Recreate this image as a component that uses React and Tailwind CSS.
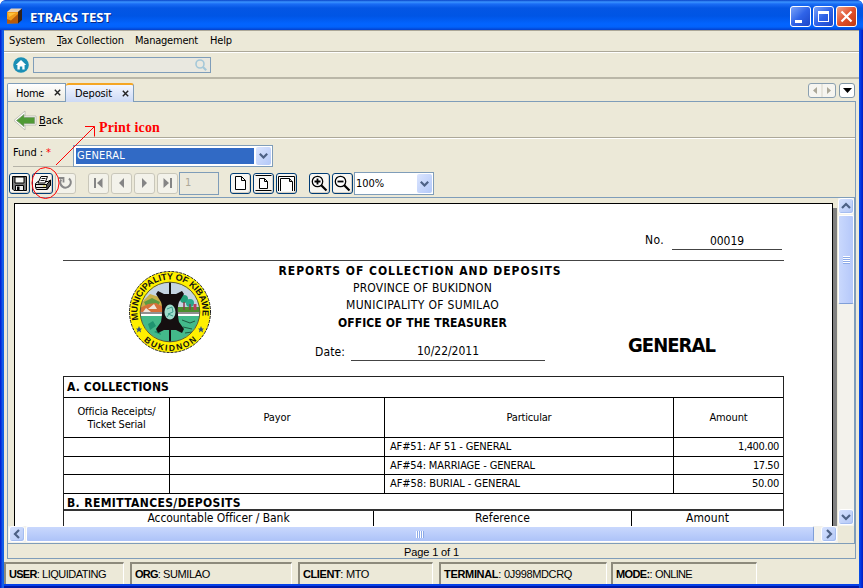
import { useLayoutEffect, useRef, useState } from "react";

const tahoma = "font-['DejaVu_Sans_Condensed','DejaVu_Sans',sans-serif]";
const arial = "font-['Liberation_Sans',sans-serif]";

// Text run that spreads its letters so that it fills exactly `w` pixels.
function Fit({ w, children, className = "" }) {
  const ref = useRef(null);
  const [gap, setGap] = useState(0);
  useLayoutEffect(() => {
    const el = ref.current;
    el.style.letterSpacing = "0px";
    const natural = el.getBoundingClientRect().width;
    setGap((w - natural) / el.textContent.length);
    el.style.letterSpacing = `${(w - natural) / el.textContent.length}px`;
  }, [w]);
  return (
    <span
      ref={ref}
      className={`inline-block shrink-0 whitespace-pre ${className}`}
      style={{ letterSpacing: `${gap}px` }}
    >
      {children}
    </span>
  );
}

function TitleBar() {
  return (
    <header className="flex h-[30px] shrink-0 items-center rounded-t-[6px] bg-[linear-gradient(to_bottom,#0842c8_0px,#3a93ff_2px,#1a6cf5_4px,#0456e4_8px,#0055e5_16px,#0264ff_24px,#0262fb_27px,#0340cc_30px)] pr-[6px] pl-[6px]">
      <svg width="17" height="17" viewBox="0 0 17 17" className="mt-[2px] shrink-0">
        <path d="M1 4 5 0.5H16L12 4Z" fill="#e8d2b8" />
        <path d="M1 4H12V15L1 15.5Z" fill="#f19a1a" />
        <path d="M1 11 5 12.500 12 6V15.5H1Z" fill="#b85a0a" />
        <path d="M12 4 16 0.5V12L12 15.5Z" fill="#33221a" />
        <path d="M2 5 10 5 3 9Z" fill="#ffc23a" />
      </svg>
      <Fit
        w={81}
        className="mt-[3px] ml-[7px] font-['Open_Sans',sans-serif] text-[13px] leading-4 font-bold text-white [text-shadow:1px_1px_0_#0a2a88]"
      >
        ETRACS TEST
      </Fit>
      <div className="mt-[2px] ml-auto flex gap-[2px]">
        <div className="size-[21px] rounded-[3px] border border-white bg-linear-to-br from-[#7ba2f8] via-[#2f63e8] to-[#1c46c8]">
          <div className="mt-[13px] ml-1 h-[3px] w-[7px] bg-white" />
        </div>
        <div className="size-[21px] rounded-[3px] border border-white bg-linear-to-br from-[#7ba2f8] via-[#2f63e8] to-[#1c46c8]">
          <div className="mt-1 ml-1 h-[11px] w-[11px] border border-t-[3px] border-white" />
        </div>
        <div className="flex size-[21px] items-center justify-center rounded-[3px] border border-white bg-linear-to-br from-[#f0a085] via-[#e0502c] to-[#c03a10]">
          <svg width="13" height="13" viewBox="0 0 13 13">
            <path d="M1.5 1.5 11.5 11.5M11.5 1.5 1.5 11.5" stroke="#fff" strokeWidth="2.2" />
          </svg>
        </div>
      </div>
    </header>
  );
}

function MenuBar() {
  return (
    <nav className="flex h-[22px] shrink-0 border-b border-white">
      <div className="flex h-[21px] flex-1 items-center border-b border-[#aca899] pt-px pl-[5px]">
        <Fit w={36}>System</Fit>
        <div className="w-3" />
        <Fit w={67}>
          <u>T</u>ax Collection
        </Fit>
        <div className="w-[11px]" />
        <Fit w={63}>Management</Fit>
        <div className="w-3" />
        <Fit w={22}>Help</Fit>
      </div>
    </nav>
  );
}

function SearchBar() {
  return (
    <div className="flex h-[26px] shrink-0 items-start border-b-2 border-[#bab7a8] pt-1 pl-[9px]">
      <svg width="16" height="16" viewBox="0 0 16 16">
        <circle cx="8" cy="8" r="7.8" fill="#1b8fb5" />
        <path d="M2.8 8 8 3 13.2 8H11.6V12.4H9.3V9.4H6.8V12.4H4.4V8Z" fill="#fff" />
      </svg>
      <div className="ml-1 flex h-4 w-[178px] items-center justify-end border border-[#7f9db9] bg-[#e9e8e0] pr-[3px]">
        <svg width="12" height="12" viewBox="0 0 12 12">
          <circle cx="5" cy="5" r="4" fill="none" stroke="#a5c8d8" strokeWidth="1.6" />
          <path d="M8 8 11.2 11.2" stroke="#a5c8d8" strokeWidth="2.2" />
        </svg>
      </div>
    </div>
  );
}

function CloseX() {
  return (
    <svg width="7" height="7" viewBox="0 0 7 7" className="shrink-0">
      <path d="M0.8 0.8 6.2 6.2M6.2 0.8 0.8 6.2" stroke="#222" strokeWidth="1.4" />
    </svg>
  );
}

function Tabs() {
  return (
    <div className="flex h-[22px] shrink-0 items-end pl-[3px]">
      <div className="flex h-[18px] w-[59px] items-center rounded-tl-[2px] border border-b-0 border-[#7f9db9] bg-linear-to-b from-white to-[#eceae0] pl-2">
        <Fit w={28} className="mt-[3px]">
          Home
        </Fit>
        <div className="w-[10px]" />
        <CloseX />
      </div>
      <div className="relative z-10 -mb-px flex h-[19px] w-[68px] items-center rounded-t-[3px] border-t-2 border-r border-t-[#f5a623] border-r-[#7f9db9] bg-linear-to-b from-[#f3f6fe] to-[#ccd9f5] pl-[9px]">
        <Fit w={37} className="mt-px">
          Deposit
        </Fit>
        <div className="w-[10px]" />
        <CloseX />
      </div>
      <div className="mb-[3px] ml-auto flex h-[15px] w-7 items-center justify-around rounded-[3px] border border-[#8ba0b0] bg-[#f6f5f0]">
        <svg width="26" height="13" viewBox="0 0 26 13">
          <path d="M8 3V10L4 6.500ZM18 3V10L22 6.500Z" fill="#aca899" />
          <path d="M13 0V13" stroke="#d8d5c8" />
        </svg>
      </div>
      <div className="mr-1 mb-[3px] ml-[3px] flex h-[15px] w-4 items-center justify-center rounded-[3px] border border-[#7f95a5] bg-white">
        <svg width="9" height="5" viewBox="0 0 9 5">
          <path d="M0 0H9L4.500 5Z" fill="#000" />
        </svg>
      </div>
    </div>
  );
}

function ArrowBox({ className }) {
  return (
    <div
      className={`flex items-center justify-center rounded-[2px] bg-linear-to-br from-[#dbe5fe] to-[#b3c8f8] ${className}`}
    >
      <svg width="9" height="6" viewBox="0 0 9 6">
        <path d="M0.800 0.800 4.500 4.500 8.200 0.800" fill="none" stroke="#4d6185" strokeWidth="2.2" />
      </svg>
    </div>
  );
}

function ToolButton({ off = false, children }) {
  return (
    <div
      className={`flex size-[21px] shrink-0 items-center justify-center rounded-[3px] border ${
        off ? "border-[#c9c7ba] bg-[#f3f2ea]" : "border-[#003c74] bg-[#f7f6f2] shadow-[inset_-1px_-1px_0_#d6d0c5]"
      }`}
    >
      <svg width="19" height="19" viewBox="0 0 19 19">
        {children}
      </svg>
    </div>
  );
}

function ReportToolbar() {
  return (
    <div className="mt-[5px] flex h-[25px] shrink-0 items-start pl-px">
      <div className="mt-px flex gap-[2px]">
        <ToolButton>
          <path d="M2.500 2.500H16.500V16.500H4L2.500 15Z" fill="#777" stroke="#000" />
          <path d="M5 3H14V9H5Z" fill="#f8f8f4" stroke="#000" />
          <path d="M5.500 11.500H13.500V16.500H5.500Z" fill="#eee" stroke="#000" />
          <path d="M7 12.500H9.500V16H7Z" fill="#000" />
        </ToolButton>
        <ToolButton>
          <path d="M2.500 9.500 5 7.500H15L17.500 6V11L14 15.500H3.500L2.500 13.500Z" fill="#e4e4e0" stroke="#000" />
          <path d="M5 9 8 2.500H14.500L12 9Z" fill="#fff" stroke="#000" />
          <path d="M8.500 4.500H12.500M7.500 6.500H11.500" stroke="#000" strokeWidth="0.900" />
          <path d="M2.500 10.500H13.500L17.500 6.500M3 13.500H13.500" fill="none" stroke="#000" />
          <path d="M13.500 10.500 17.500 6.500V11L14 15.500Z" fill="#555" stroke="#000" />
          <path d="M10 12H12.500" stroke="#d8c820" strokeWidth="1.200" />
        </ToolButton>
        <ToolButton off>
          <path d="M13 4.500A5.200 5.200 0 1 1 5.200 5.500" fill="none" stroke="#888" strokeWidth="2.200" />
          <path d="M2.500 4H7.500V8.500" fill="none" stroke="#888" strokeWidth="1.800" />
        </ToolButton>
      </div>
      <div className="mt-px ml-3 flex gap-[2px]">
        <ToolButton off>
          <path d="M5 4H7V14H5ZM13.500 4V14L8 9Z" fill="#858585" />
        </ToolButton>
        <ToolButton off>
          <path d="M12 4V14L7 9Z" fill="#858585" />
        </ToolButton>
        <ToolButton off>
          <path d="M7 4V14L12 9Z" fill="#858585" />
        </ToolButton>
        <ToolButton off>
          <path d="M5.500 4V14L11 9ZM12 4H14V14H12Z" fill="#858585" />
        </ToolButton>
      </div>
      <div className="ml-px flex h-[23px] w-10 items-center border border-[#7f9db9] bg-[#ebe9dc] pl-[5px] text-[#aca899]">1</div>
      <div className="mt-px ml-[11px] flex gap-[2px]">
        <ToolButton>
          <path d="M4.500 2.500H10.500L14.500 6.500V15.500H4.500ZM10.500 2.500V6.500H14.500" fill="#fff" stroke="#000" />
        </ToolButton>
        <ToolButton>
          <path d="M1.500 1.500H17.500M1.500 16.500H17.500M5.500 4.500H10.500L13.500 7.500V14.500H5.500ZM10.500 4.500V7.500H13.500" fill="#fff" stroke="#000" />
        </ToolButton>
        <ToolButton>
          <path d="M1.500 17V2.500H17.500V17M3.500 17V4.500H12.500L15.500 8V17M12.500 4.500V7.500H15.500" fill="#fff" stroke="#000" />
        </ToolButton>
      </div>
      <div className="mt-px ml-3 flex gap-[2px]">
        <ToolButton>
          <path d="M11 11 16.500 16.500" stroke="#000" strokeWidth="2.200" />
          <circle cx="7.500" cy="7.500" r="5.200" fill="#fff" stroke="#000" strokeWidth="1.300" />
          <path d="M4.500 7.500H10.500M7.500 4.500V10.500" stroke="#000" strokeWidth="1.800" />
        </ToolButton>
        <ToolButton>
          <path d="M11 11 16.500 16.500" stroke="#000" strokeWidth="2.200" />
          <circle cx="7.500" cy="7.500" r="5.200" fill="#fff" stroke="#000" strokeWidth="1.300" />
          <path d="M4.500 7.500H10.500" stroke="#000" strokeWidth="1.800" />
        </ToolButton>
      </div>
      <div className="ml-px flex h-[23px] w-20 items-center justify-between border border-[#7f9db9] bg-white pr-px pl-px">
        <Fit w={28} className="mt-[2px]">
          100%
        </Fit>
        <ArrowBox className="h-[19px] w-[15px]" />
      </div>
    </div>
  );
}

function Seal() {
  return (
    <svg width="84" height="84" viewBox="-42 -42 84 84">
      <defs>
        <path id="arcTop" d="M-31.500 8A32.500 32.500 0 1 1 31.500 8" />
        <path id="arcBottom" d="M-31 23.500A39 39 0 0 0 31 23.500" />
        <clipPath id="disc">
          <circle r="29.500" />
        </clipPath>
      </defs>
      <circle r="40.500" fill="#fff000" stroke="#222" strokeWidth="1" strokeDasharray="3 1" />
      <g clipPath="url(#disc)">
        <rect x="-30" y="-30" width="60" height="60" fill="#c5d5e2" />
        <path d="M-30-8-20-18-8-14V-2H-30Z" fill="#c9b04a" />
        <path d="M-26-10-18-14-10-10-12-6-24-6Z" fill="#5f9a42" />
        <path d="M-30-4-22-8-14-9-7-5V1H-30Z" fill="#d5713a" />
        <path d="M-22-3-16-8-13-3ZM-27 0-24-4-19 0Z" fill="#f0e6dc" />
        <path d="M8-5H30V1H8Z" fill="#4c8f2e" />
        <circle cx="14" cy="-13" r="4" fill="#22a07a" />
        <circle cx="20" cy="-9" r="4" fill="#2aa88c" />
        <path d="M14-10V-2M20-8V-2" stroke="#8b3b4c" strokeWidth="1.500" />
        <path d="M25-8V-2" stroke="#b9405a" strokeWidth="3" />
        <rect x="-30" y="0" width="60" height="4" fill="#fff" />
        <path d="M-30 1H30" stroke="#222" strokeWidth="1" />
        <rect x="-30" y="4" width="60" height="27" fill="#43b98a" />
        <path d="M-22 12-17 9-14 14-20 18ZM-16 20-11 17-9 23" fill="#1f9470" />
        <path d="M12 8 20 11 25 9M13 15 22 17M15 21 22 20" stroke="#1d5a40" fill="none" />
        <path d="M0-30V30" stroke="#111" strokeWidth="2" />
        <path
          d="M-12-21-6-18H6L12-21 14-18 9-10C7-5 8 5 9 10L14 17 12 21 6 18H-6L-12 21-14 17-9 10C-8 5-7-5-9-10L-14-18Z"
          fill="#150f10"
        />
        <ellipse cx="0" cy="0" rx="5.500" ry="7.500" fill="#9fdccb" />
        <path d="M-3-3 2-5 3 0-2 2 3 4M-3 5 0 1" stroke="#3f9f8d" fill="none" />
      </g>
      <circle r="29.800" fill="none" stroke="#333" strokeWidth="0.800" />
      <text fontFamily="Liberation Sans, sans-serif" fontSize="9" fontWeight="bold" fill="#111">
        <textPath href="#arcTop" textLength="114">MUNICIPALITY OF KIBAWE</textPath>
      </text>
      <text fontFamily="Liberation Sans, sans-serif" fontSize="8.500" fontWeight="bold" fill="#111">
        <textPath href="#arcBottom" startOffset="7" textLength="58">BUKIDNON</textPath>
      </text>
      <path
        d="M-31 14-30 16.500-28 16.500-29.500 18-29 20.500-31 19-33 20.500-32.500 18-34 16.500-32 16.500ZM31 14 32 16.500 34 16.500 32.500 18 33 20.500 31 19 29 20.500 29.500 18 28 16.500 30 16.500Z"
        fill="#2e4f7f"
      />
    </svg>
  );
}

const collections = [
  { h: "h-[19px]", name: "AF#51: AF 51 - GENERAL", nameW: 121, amount: "1,400.00", amountW: 41 },
  { h: "h-[18px]", name: "AF#54: MARRIAGE - GENERAL", nameW: 145, amount: "17.50", amountW: 26 },
  { h: "h-[19px]", name: "AF#58: BURIAL - GENERAL", nameW: 130, amount: "50.00", amountW: 27 },
];

function Report() {
  return (
    <article className="flex w-[819px] shrink-0 flex-col overflow-hidden border border-b-0 border-black bg-white text-[12px] leading-4">
      <div className="flex h-[46px] shrink-0 items-end justify-end pr-[50px]">
        <Fit w={19} className="mr-2 mb-[2px]">
          No.
        </Fit>
        <div className="flex h-[18px] w-[110px] justify-center border-b border-[#444]">
          <Fit w={34} className="mt-px">
            00019
          </Fit>
        </div>
      </div>
      <div className="mt-[10px] ml-12 h-px w-[721px] shrink-0 bg-[#444]" />
      <div className="ml-12 grid h-[115px] w-[721px] shrink-0 grid-cols-[216px_282px_1fr]">
        <div className="pt-[9px] pl-[65px]">
          <Seal />
        </div>
        <div className="flex flex-col items-center">
          <Fit w={283} className="h-[18px] pt-px leading-[18px] font-bold">
            REPORTS OF COLLECTION AND DEPOSITS
          </Fit>
          <Fit w={139} className="ml-[5px] h-[17px] pt-px leading-[17px]">
            PROVINCE OF BUKIDNON
          </Fit>
          <Fit w={153} className="ml-[5px] h-[17px] pt-px leading-[17px]">
            MUNICIPALITY OF SUMILAO
          </Fit>
          <Fit w={169} className="ml-[5px] h-[18px] pt-px leading-[18px] font-bold">
            OFFICE OF THE TREASURER
          </Fit>
          <div className="mt-3 flex h-[18px] self-stretch pl-9">
            <Fit w={30} className="mr-[6px] leading-[18px]">
              Date:
            </Fit>
            <div className="flex w-[194px] justify-center border-b border-[#444]">
              <Fit w={62}>10/22/2011</Fit>
            </div>
          </div>
        </div>
        <div className="pt-[72px] pl-[67px]">
          <Fit w={87} className="text-[20px] leading-6 font-bold">
            GENERAL
          </Fit>
        </div>
      </div>
      <div className="ml-12 flex h-[160px] w-[721px] shrink-0 flex-col border border-b-0 border-[#222]">
        <div className="flex h-[21px] shrink-0 items-center border-b border-black pl-[3px] font-bold">
          <Fit w={102}>A. COLLECTIONS</Fit>
        </div>
        <div className="grid h-10 shrink-0 grid-cols-[106px_215px_289px_109px] border-b border-black text-[11px]">
          <div className="flex flex-col items-center justify-center border-r border-black leading-[13px]">
            <Fit w={78}>Officia Receipts/</Fit>
            <Fit w={58}>Ticket Serial</Fit>
          </div>
          <div className="flex items-center justify-center border-r border-black">
            <Fit w={27}>Payor</Fit>
          </div>
          <div className="flex items-center justify-center border-r border-black">
            <Fit w={45}>Particular</Fit>
          </div>
          <div className="flex items-center justify-center">
            <Fit w={38}>Amount</Fit>
          </div>
        </div>
        {collections.map((row) => (
          <div
            key={row.name}
            className={`grid shrink-0 grid-cols-[106px_215px_289px_109px] border-b border-black text-[11px] ${row.h}`}
          >
            <div className="border-r border-black" />
            <div className="border-r border-black" />
            <div className="flex items-center border-r border-black pl-[5px]">
              <Fit w={row.nameW}>{row.name}</Fit>
            </div>
            <div className="flex items-center justify-end pr-1">
              <Fit w={row.amountW}>{row.amount}</Fit>
            </div>
          </div>
        ))}
        <div className="flex h-[17px] shrink-0 items-center border-b-2 border-[#333] pt-[2px] pl-[3px] leading-[14px] font-bold">
          <Fit w={174}>B. REMITTANCES/DEPOSITS</Fit>
        </div>
        <div className="grid flex-1 grid-cols-[310px_258px_1fr] leading-[14px]">
          <div className="flex justify-center border-r border-black">
            <Fit w={142}>Accountable Officer / Bank</Fit>
          </div>
          <div className="flex justify-center border-r border-black">
            <Fit w={55}>Reference</Fit>
          </div>
          <div className="flex justify-center">
            <Fit w={43}>Amount</Fit>
          </div>
        </div>
      </div>
    </article>
  );
}

function ScrollButton({ turn = "" }) {
  return (
    <div className="flex size-4 shrink-0 items-center justify-center rounded-[3px] border border-white bg-linear-to-br from-[#d5e1fe] to-[#b4c8f6] shadow-[inset_-1px_-1px_0_#a5bdf0]">
      <svg width="10" height="10" viewBox="0 0 10 10" className={turn}>
        <path d="M1 3 5 7 9 3" fill="none" stroke="#4d6185" strokeWidth="2.200" />
      </svg>
    </div>
  );
}

function Viewer() {
  return (
    <section className="flex h-[347px] shrink-0 flex-col border-y border-[#7f9db9]">
      <div className="flex h-[328px] shrink-0">
        <div className="flex w-[830px] shrink-0 pt-[5px] pl-[6px]">
          <Report />
          <div className="mt-[5px] w-1 bg-[#808080]" />
        </div>
        <div className="flex w-4 shrink-0 flex-col bg-[#f3f2ec]">
          <ScrollButton turn="rotate-180" />
          <div className="mt-px flex h-[89px] items-center justify-center rounded-[2px] border border-white border-b-[#7f9fd8] bg-linear-to-r from-[#c9d8fd] to-[#b5c8fa]">
            <div className="h-2 w-[7px] bg-[repeating-linear-gradient(to_bottom,#fff_0px,#fff_1px,#8caae8_1px,#8caae8_2px)]" />
          </div>
          <div className="mt-auto mb-px">
            <ScrollButton />
          </div>
        </div>
        <div className="w-px bg-[#7f9db9]" />
      </div>
      <div className="flex h-[17px] shrink-0">
        <div className="flex w-[830px] bg-[#f3f2ec] pl-px">
          <ScrollButton turn="rotate-90" />
          <div className="ml-px flex h-4 w-[788px] items-center justify-center rounded-[2px] border border-white border-r-[#7f9fd8] bg-linear-to-b from-[#c9d8fd] to-[#adc3f8]">
            <div className="h-[7px] w-2 bg-[repeating-linear-gradient(to_right,#fff_0px,#fff_1px,#8caae8_1px,#8caae8_2px)]" />
          </div>
          <div className="mr-px ml-auto">
            <ScrollButton turn="-rotate-90" />
          </div>
        </div>
        <div className="w-4" />
        <div className="w-px bg-[#7f9db9]" />
      </div>
    </section>
  );
}

const statusFields = [
  { box: "w-[120px] mr-[6px]", name: "USER", nameW: 30, value: "LIQUIDATING", valueW: 64 },
  { box: "w-[162px] mr-[6px]", name: "ORG", nameW: 25, value: "SUMILAO", valueW: 47 },
  { box: "w-[135px] mr-[6px]", name: "CLIENT", nameW: 40, value: "MTO", valueW: 23 },
  { box: "w-[168px] mr-[4px]", name: "TERMINAL", nameW: 57, value: "0J998MDCRQ", valueW: 68 },
  { box: "w-[146px]", name: "MODE:", nameW: 36, value: "ONLINE", valueW: 37 },
];

function StatusBar() {
  return (
    <footer className={`mt-[3px] flex h-[22px] shrink-0 text-[11px] ${arial}`}>
      {statusFields.map((f) => (
        <div
          key={f.name}
          className={`flex shrink-0 items-center border-t-2 border-r border-l-2 border-t-[#8d8a7c] border-r-white border-l-[#8d8a7c] pl-[3px] ${f.box}`}
        >
          <Fit w={f.nameW} className="mr-[3px]">
            <b>{f.name}</b>:
          </Fit>
          <Fit w={f.valueW}>{f.value}</Fit>
        </div>
      ))}
    </footer>
  );
}

function Annotation() {
  return (
    <div className="pointer-events-none absolute top-[118px] left-[30px] z-20 flex">
      <svg width="68" height="84" viewBox="30 118 68 84" fill="none" stroke="#f00" strokeWidth="1">
        <ellipse cx="45.500" cy="183" rx="13.500" ry="15.500" />
        <path d="M56 165 94.500 126.500M85 126.500H94.500V136.500" />
      </svg>
      <Fit w={61} className="mt-[2px] ml-px font-['Liberation_Serif',serif] text-[14px] leading-4 font-bold text-[#f00]">
        Print icon
      </Fit>
    </div>
  );
}

export default function App() {
  return (
    <div className="h-[588px] w-[863px] overflow-hidden bg-white">
      <div
        className={`relative flex h-[588px] w-[863px] flex-col overflow-hidden rounded-t-[6px] bg-[#0a36d8] text-[11px] text-black ${tahoma}`}
      >
        <TitleBar />
        <div className="flex h-[558px] bg-[linear-gradient(to_right,#0019cf_0px,#0831d9_1px,#166aee_3px,#0855dd_4px,#0855dd_859px,#0440ee_860px,#001dc0_863px)]">
          <div className="ml-1 flex h-[554px] w-[855px] flex-col bg-[#ece9d8] shadow-[0_2px_0_#0540e8,0_4px_0_#0018a8]">
            <div className="h-px shrink-0 bg-[#aca899]" />
            <MenuBar />
            <SearchBar />
            <Tabs />
            <main className="mr-[3px] ml-[3px] flex h-[458px] shrink-0 flex-col border border-[#7f9db9]">
              <div className="flex h-[36px] shrink-0 items-center border-b border-[#aca899] pl-[5px] shadow-[0_1px_0_#fff]">
                <svg width="24" height="21" viewBox="0 0 24 21" className="mt-px">
                  <path d="M1 10.500 12 1V6H23V15H12V20Z" fill="#fff" stroke="#b5b5aa" strokeWidth="0.800" />
                  <path d="M3.500 10.500 11 4.500V7.500H21.500V13.500H11V16.500Z" fill="#4f9a35" stroke="#7c9a70" strokeWidth="0.800" />
                </svg>
                <Fit w={24} className="mt-[3px] ml-[2px]">
                  <u>B</u>ack
                </Fit>
              </div>
              <div className="mt-[7px] flex h-[22px] shrink-0 pl-[5px]">
                <div className="flex w-[60px] border-b border-[#b5b3a8] text-[11px]">
                  <Fit w={30}>Fund :</Fit>
                  <span className="ml-[3px] text-[#f00]">*</span>
                </div>
                <div className="flex h-[22px] w-[200px] items-center justify-between border border-[#7f9db9] bg-white px-px">
                  <div className="ml-px flex h-4 w-[178px] items-center bg-[#316ac5] text-white">
                    <Fit w={48} className="mt-px ml-px">
                      GENERAL
                    </Fit>
                  </div>
                  <ArrowBox className="h-[18px] w-[15px]" />
                </div>
              </div>
              <ReportToolbar />
              <Viewer />
              <div className="flex flex-1 items-center justify-center">
                <Fit w={55} className={arial}>
                  Page 1 of 1
                </Fit>
              </div>
            </main>
            <StatusBar />
          </div>
        </div>
        <Annotation />
      </div>
    </div>
  );
}
